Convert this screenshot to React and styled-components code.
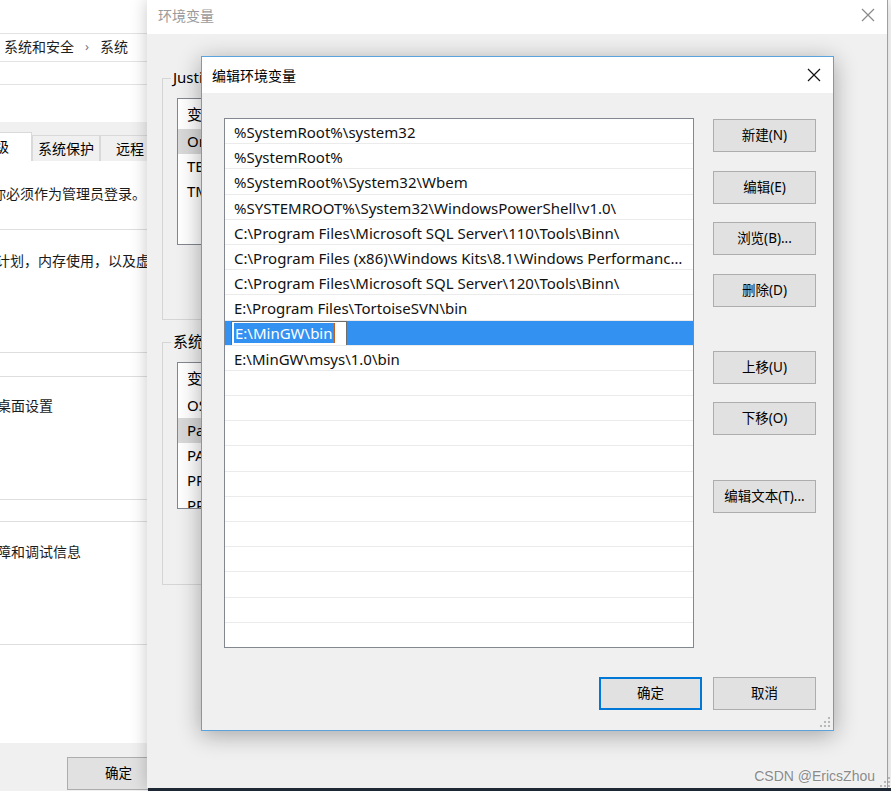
import React from "react"
import styled, { createGlobalStyle } from "styled-components"

const font = `"Noto Sans", "Noto Sans CJK SC", sans-serif`

const Global = createGlobalStyle`
  * { box-sizing: border-box; }
  body { margin: 0; background: #fff; font-family: ${font}; }
`

const Desktop = styled.div`
  position: relative;
  width: 891px;
  height: 791px;
  overflow: hidden;
  background: #fff;
  font-family: ${font};
  color: #000;
`

// windows sit on the desktop at their own place
const Window = styled.div`
  position: absolute;
  left: ${p => p.$x}px;
  top: ${p => p.$y}px;
  width: ${p => p.$w}px;
  height: ${p => p.$h}px;
  display: flex;
  flex-direction: column;
  overflow: hidden;
`
const BackWindow = styled(Window)`
  background: #fff;
`
const EnvWindow = styled(Window)`
  background: #f0f0f0;
  border-right: 1px solid #a0a0a0;
  box-shadow: 0 0 16px rgba(0, 0, 0, 0.22);
  overflow: visible;
`
const EditDialog = styled(Window)`
  background: #f0f0f0;
  border: 1px solid #5aa3dc;
  box-shadow: 0 4px 22px rgba(0, 0, 0, 0.32);
  overflow: visible;
`

/* ---------- back window (system properties) ---------- */
const Crumb = styled.div`
  margin-top: 33px;
  height: 29px;
  border-top: 1px solid #e3e3e3;
  border-bottom: 1px solid #e3e3e3;
  display: flex;
  align-items: center;
  gap: 11px;
  padding: 0 0 3px 4px;
  font-size: 14px;
  color: #1e1e1e;
  white-space: nowrap;
`
const Chevron = styled.span`
  color: #777;
  font-size: 13px;
`
const Rule = styled.div`
  margin-top: ${p => p.$mt}px;
  border-top: 1px solid #e3e3e3;
`
const TabStrip = styled.div`
  margin-top: 37px;
  height: 39px;
  background: #f0f0f0;
  display: flex;
  align-items: flex-end;
`
const Tab = styled.div`
  flex: none;
  width: ${p => p.$w}px;
  margin-left: ${p => p.$ml || 0}px;
  height: ${p => (p.$active ? 29 : 26)}px;
  background: ${p => (p.$active ? "#fff" : "#f0f0f0")};
  border: 1px solid #d9d9d9;
  border-bottom: none;
  display: flex;
  align-items: center;
  justify-content: ${p => (p.$active ? "flex-end" : "center")};
  padding-right: ${p => (p.$active ? 22 : 0)}px;
  padding-bottom: 2px;
  font-size: 14px;
  white-space: nowrap;
`
const TabPage = styled.div`
  flex: 1;
  background: #fff;
  display: flex;
  flex-direction: column;
`
const Line = styled.div`
  margin-left: ${p => p.$ml || 0}px;
  padding-top: ${p => p.$pt || 0}px;
  font-size: 14px;
  line-height: 20px;
  white-space: nowrap;
  color: #1a1a1a;
`
const Note = styled.div`
  height: 68px;
`
const BackGroup = styled.div`
  flex: none;
  height: ${p => p.$h}px;
  margin: ${p => p.$mt || 0}px -30px 0 -30px;
  padding-left: 30px;
  border: 1px solid #dedede;
`
const BackFooter = styled.div`
  height: 48px;
  background: #f0f0f0;
  padding: 14px 0 0 67px;
`

/* ---------- shared bits ---------- */
const TitleBar = styled.div`
  flex: none;
  height: ${p => p.$h}px;
  background: #fff;
  display: flex;
  align-items: center;
  justify-content: space-between;
  padding: 0 12px ${p => p.$pb || 0}px ${p => p.$pl}px;
  font-size: 14px;
  color: ${p => (p.$inactive ? "#9a9a9a" : "#000")};
`
const Button = styled.button`
  flex: none;
  width: 103px;
  height: 33px;
  margin-top: ${p => p.$mt || 0}px;
  padding: 0 0 4px;
  background: #e1e1e1;
  border: ${p => (p.$primary ? "2px solid #0078d7" : "1px solid #adadad")};
  font-family: ${font};
  font-size: 13.5px;
  color: #000;
`

/* ---------- environment window ---------- */
const EnvBody = styled.div`
  flex: 1;
  padding-left: 15px;
  display: flex;
  flex-direction: column;
`
const GroupBox = styled.div`
  position: relative;
  flex: none;
  width: 640px;
  height: ${p => p.$h}px;
  margin-top: ${p => p.$mt}px;
  border: 1px solid #d5d5d5;
  padding: 19px 0 0 14px;
`
const Legend = styled.span`
  position: absolute;
  top: -12px;
  left: 8px;
  padding: 0 2px;
  background: #f0f0f0;
  font-size: 15px;
  line-height: 20px;
  white-space: nowrap;
`
const VarList = styled.div`
  width: 600px;
  height: 147px;
  background: #fff;
  border: 1px solid #828790;
  overflow: hidden;
`
const VarHead = styled.div`
  height: 30px;
  line-height: 30px;
  padding-left: 9px;
  font-size: 15px;
`
const VarRow = styled.div`
  height: 25px;
  line-height: 25px;
  padding-left: 9px;
  font-size: 15px;
  background: ${p => (p.$sel ? "#d9d9d9" : "transparent")};
  white-space: nowrap;
`

/* ---------- edit dialog ---------- */
const DialogBody = styled.div`
  flex: 1;
  display: grid;
  grid-template-columns: 470px 103px;
  grid-template-rows: 530px auto;
  column-gap: 19px;
  padding: 25px 0 0 22px;
`
const PathList = styled.div`
  background: #fff;
  border: 1px solid #828790;
  display: flex;
  flex-direction: column;
  overflow: hidden;
`
const PathRow = styled.div`
  flex: none;
  height: 25.2px;
  line-height: 26px;
  border-bottom: 1px solid #ebebeb;
  padding: 0 4px 0 ${p => (p.$sel ? 6 : 9)}px;
  background: ${p => (p.$sel ? "#3391f2" : "transparent")};
  font-size: 15px;
  white-space: nowrap;
  overflow: hidden;
  text-overflow: ellipsis;
  color: #111;
`
const EditBox = styled.span`
  display: inline-flex;
  align-items: center;
  width: 116px;
  height: 25px;
  padding-left: 2px;
  background: #fff;
  border: 1px solid #6d6d6d;
  vertical-align: top;
`
const Picked = styled.span`
  background: #3391f2;
  color: #fff;
  line-height: 20px;
  padding: 0 1px;
  border-right: 1px solid #c8601c;
`
const ButtonColumn = styled.div`
  display: flex;
  flex-direction: column;
  padding-top: 1px;
`
const Footer = styled.div`
  grid-column: 1 / -1;
  margin-top: 29px;
  display: flex;
  justify-content: flex-end;
  gap: 11px;
`
const Grip = styled.svg`
  position: absolute;
  right: ${p => p.$r}px;
  bottom: ${p => p.$b}px;
`
const Taskbar = styled.div`
  position: absolute;
  left: 148px;
  right: 0;
  bottom: 0;
  height: 3px;
  background: #1d2834;
`
const Watermark = styled.div`
  position: absolute;
  right: 16px;
  bottom: 7px;
  font-family: "Liberation Sans", Arial, sans-serif;
  font-size: 14px;
  color: #8a8a8a;
  text-shadow: 0 0 2px #fff;
`

const Close = ({ color }) => (
  <svg width="14" height="14" viewBox="0 0 14 14">
    <path d="M1 1 L13 13 M13 1 L1 13" stroke={color} strokeWidth="1.2" fill="none" />
  </svg>
)

const GripDots = ({ r, b }) => (
  <Grip $r={r} $b={b} width="11" height="11" viewBox="0 0 11 11">
    {[[9, 1], [9, 5], [5, 5], [9, 9], [5, 9], [1, 9]].map(([x, y]) => (
      <rect key={x + "-" + y} x={x} y={y} width="2" height="2" fill="#b8b8b8" />
    ))}
  </Grip>
)

const paths = [
  "%SystemRoot%\\system32",
  "%SystemRoot%",
  "%SystemRoot%\\System32\\Wbem",
  "%SYSTEMROOT%\\System32\\WindowsPowerShell\\v1.0\\",
  "C:\\Program Files\\Microsoft SQL Server\\110\\Tools\\Binn\\",
  "C:\\Program Files (x86)\\Windows Kits\\8.1\\Windows Performance Toolkit\\",
  "C:\\Program Files\\Microsoft SQL Server\\120\\Tools\\Binn\\",
  "E:\\Program Files\\TortoiseSVN\\bin",
  "E:\\MinGW\\bin",
  "E:\\MinGW\\msys\\1.0\\bin",
]
const rows = [...paths, ...Array(11).fill("")]

export default function App() {
  return (
    <Desktop>
      <Global />

      <BackWindow $x={0} $y={0} $w={160} $h={791}>
        <Crumb>
          <span>系统和安全</span>
          <Chevron>›</Chevron>
          <span>系统</span>
        </Crumb>
        <Rule $mt={22} />
        <TabStrip>
          <Tab $active $w={58} $ml={-26}>高级</Tab>
          <Tab $w={68}>系统保护</Tab>
          <Tab $w={60}>远程</Tab>
        </TabStrip>
        <TabPage>
          <Note>
            <Line $ml={-8} $pt={23}>你必须作为管理员登录。</Line>
          </Note>
          <BackGroup $h={124}>
            <Line $ml={-5} $pt={21}>计划，内存使用，以及虚拟内存</Line>
          </BackGroup>
          <BackGroup $h={124} $mt={23}>
            <Line $ml={-4} $pt={19}>桌面设置</Line>
          </BackGroup>
          <BackGroup $h={124} $mt={21}>
            <Line $ml={-4} $pt={20}>障和调试信息</Line>
          </BackGroup>
        </TabPage>
        <BackFooter>
          <Button>确定</Button>
        </BackFooter>
      </BackWindow>

      <EnvWindow $x={147} $y={0} $w={741} $h={788}>
        <TitleBar $h={34} $pl={11} $pb={4} $inactive>
          <span>环境变量</span>
          <Close color="#8a8a8a" />
        </TitleBar>
        <EnvBody>
          <GroupBox $h={242} $mt={44}>
            <Legend>Justin 的用户变量(U)</Legend>
            <VarList>
              <VarHead>变量</VarHead>
              <VarRow $sel>OneDrive</VarRow>
              <VarRow>TEMP</VarRow>
              <VarRow>TMP</VarRow>
            </VarList>
          </GroupBox>
          <GroupBox $h={243} $mt={22}>
            <Legend>系统变量(S)</Legend>
            <VarList>
              <VarHead>变量</VarHead>
              <VarRow>OS</VarRow>
              <VarRow $sel>Path</VarRow>
              <VarRow>PATHEXT</VarRow>
              <VarRow>PROCESSOR_ARCHITECTURE</VarRow>
              <VarRow>PROCESSOR_IDENTIFIER</VarRow>
            </VarList>
          </GroupBox>
        </EnvBody>
      </EnvWindow>

      <EditDialog $x={201} $y={56} $w={633} $h={675}>
        <TitleBar $h={36} $pl={10} $pb={1}>
          <span>编辑环境变量</span>
          <Close color="#111" />
        </TitleBar>
        <DialogBody>
          <PathList>
            {rows.map((p, i) =>
              p === "E:\\MinGW\\bin" ? (
                <PathRow key={i} $sel>
                  <EditBox>
                    <Picked>{p}</Picked>
                  </EditBox>
                </PathRow>
              ) : (
                <PathRow key={i}>{p}</PathRow>
              )
            )}
          </PathList>
          <ButtonColumn>
            <Button>新建(N)</Button>
            <Button $mt={19}>编辑(E)</Button>
            <Button $mt={18}>浏览(B)...</Button>
            <Button $mt={19}>删除(D)</Button>
            <Button $mt={44}>上移(U)</Button>
            <Button $mt={18}>下移(O)</Button>
            <Button $mt={45}>编辑文本(T)...</Button>
          </ButtonColumn>
          <Footer>
            <Button $primary>确定</Button>
            <Button>取消</Button>
          </Footer>
        </DialogBody>
        <GripDots r={3} b={3} />
      </EditDialog>

      <Taskbar />
      <Watermark>CSDN @EricsZhou</Watermark>
      <GripDots r={1} b={4} />
    </Desktop>
  )
}
